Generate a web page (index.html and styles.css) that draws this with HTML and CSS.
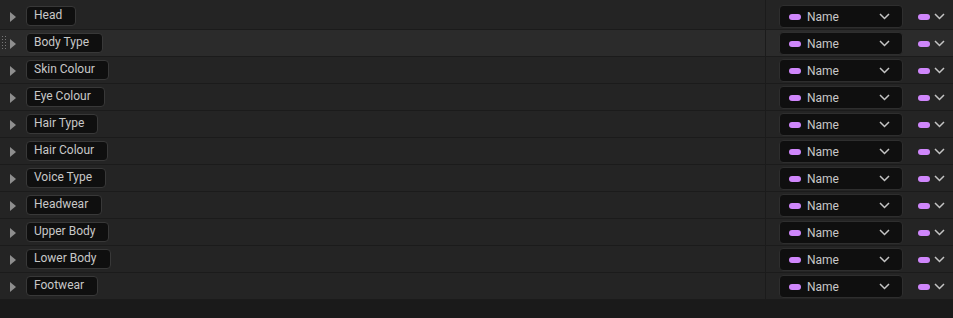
FILE: index.html
```html
<!DOCTYPE html>
<html>
<head>
  <link rel="stylesheet" href="styles.css">
</head>
<body>
  <div class="details">
    <div class="top-strip"><div class="left"></div><div class="right"></div></div>

    <div class="row">
      <div class="left"><span class="handle"></span><span class="arrow"></span><span class="name-box">Head</span></div>
      <div class="right"><div class="dropdown"><span class="pin"></span><span class="label">Name</span><svg class="chev" width="11" height="7" viewBox="0 0 11 7"><polyline points="1,1 5.5,5.5 10,1"/></svg></div><span class="pin"></span><svg class="chev small" width="11" height="7" viewBox="0 0 11 7"><polyline points="1,1 5.5,5.5 10,1"/></svg></div>
    </div>
    <div class="row hovered">
      <div class="left"><span class="handle"></span><span class="arrow"></span><span class="name-box">Body Type</span></div>
      <div class="right"><div class="dropdown"><span class="pin"></span><span class="label">Name</span><svg class="chev" width="11" height="7" viewBox="0 0 11 7"><polyline points="1,1 5.5,5.5 10,1"/></svg></div><span class="pin"></span><svg class="chev small" width="11" height="7" viewBox="0 0 11 7"><polyline points="1,1 5.5,5.5 10,1"/></svg></div>
    </div>
    <div class="row">
      <div class="left"><span class="handle"></span><span class="arrow"></span><span class="name-box">Skin Colour</span></div>
      <div class="right"><div class="dropdown"><span class="pin"></span><span class="label">Name</span><svg class="chev" width="11" height="7" viewBox="0 0 11 7"><polyline points="1,1 5.5,5.5 10,1"/></svg></div><span class="pin"></span><svg class="chev small" width="11" height="7" viewBox="0 0 11 7"><polyline points="1,1 5.5,5.5 10,1"/></svg></div>
    </div>
    <div class="row">
      <div class="left"><span class="handle"></span><span class="arrow"></span><span class="name-box">Eye Colour</span></div>
      <div class="right"><div class="dropdown"><span class="pin"></span><span class="label">Name</span><svg class="chev" width="11" height="7" viewBox="0 0 11 7"><polyline points="1,1 5.5,5.5 10,1"/></svg></div><span class="pin"></span><svg class="chev small" width="11" height="7" viewBox="0 0 11 7"><polyline points="1,1 5.5,5.5 10,1"/></svg></div>
    </div>
    <div class="row">
      <div class="left"><span class="handle"></span><span class="arrow"></span><span class="name-box">Hair Type</span></div>
      <div class="right"><div class="dropdown"><span class="pin"></span><span class="label">Name</span><svg class="chev" width="11" height="7" viewBox="0 0 11 7"><polyline points="1,1 5.5,5.5 10,1"/></svg></div><span class="pin"></span><svg class="chev small" width="11" height="7" viewBox="0 0 11 7"><polyline points="1,1 5.5,5.5 10,1"/></svg></div>
    </div>
    <div class="row">
      <div class="left"><span class="handle"></span><span class="arrow"></span><span class="name-box">Hair Colour</span></div>
      <div class="right"><div class="dropdown"><span class="pin"></span><span class="label">Name</span><svg class="chev" width="11" height="7" viewBox="0 0 11 7"><polyline points="1,1 5.5,5.5 10,1"/></svg></div><span class="pin"></span><svg class="chev small" width="11" height="7" viewBox="0 0 11 7"><polyline points="1,1 5.5,5.5 10,1"/></svg></div>
    </div>
    <div class="row">
      <div class="left"><span class="handle"></span><span class="arrow"></span><span class="name-box">Voice Type</span></div>
      <div class="right"><div class="dropdown"><span class="pin"></span><span class="label">Name</span><svg class="chev" width="11" height="7" viewBox="0 0 11 7"><polyline points="1,1 5.5,5.5 10,1"/></svg></div><span class="pin"></span><svg class="chev small" width="11" height="7" viewBox="0 0 11 7"><polyline points="1,1 5.5,5.5 10,1"/></svg></div>
    </div>
    <div class="row">
      <div class="left"><span class="handle"></span><span class="arrow"></span><span class="name-box">Headwear</span></div>
      <div class="right"><div class="dropdown"><span class="pin"></span><span class="label">Name</span><svg class="chev" width="11" height="7" viewBox="0 0 11 7"><polyline points="1,1 5.5,5.5 10,1"/></svg></div><span class="pin"></span><svg class="chev small" width="11" height="7" viewBox="0 0 11 7"><polyline points="1,1 5.5,5.5 10,1"/></svg></div>
    </div>
    <div class="row">
      <div class="left"><span class="handle"></span><span class="arrow"></span><span class="name-box">Upper Body</span></div>
      <div class="right"><div class="dropdown"><span class="pin"></span><span class="label">Name</span><svg class="chev" width="11" height="7" viewBox="0 0 11 7"><polyline points="1,1 5.5,5.5 10,1"/></svg></div><span class="pin"></span><svg class="chev small" width="11" height="7" viewBox="0 0 11 7"><polyline points="1,1 5.5,5.5 10,1"/></svg></div>
    </div>
    <div class="row">
      <div class="left"><span class="handle"></span><span class="arrow"></span><span class="name-box">Lower Body</span></div>
      <div class="right"><div class="dropdown"><span class="pin"></span><span class="label">Name</span><svg class="chev" width="11" height="7" viewBox="0 0 11 7"><polyline points="1,1 5.5,5.5 10,1"/></svg></div><span class="pin"></span><svg class="chev small" width="11" height="7" viewBox="0 0 11 7"><polyline points="1,1 5.5,5.5 10,1"/></svg></div>
    </div>
    <div class="row">
      <div class="left"><span class="handle"></span><span class="arrow"></span><span class="name-box">Footwear</span></div>
      <div class="right"><div class="dropdown"><span class="pin"></span><span class="label">Name</span><svg class="chev" width="11" height="7" viewBox="0 0 11 7"><polyline points="1,1 5.5,5.5 10,1"/></svg></div><span class="pin"></span><svg class="chev small" width="11" height="7" viewBox="0 0 11 7"><polyline points="1,1 5.5,5.5 10,1"/></svg></div>
    </div>
  </div>
</body>
</html>
```

FILE: styles.css
```css
body {
  margin: 0;
  background-color: #1a1a1a;
  font-family: 'Roboto', 'Liberation Sans', sans-serif;
  font-size: 12px;
  color: #c4c4c4;
}

.details {
  display: flex;
  flex-direction: column;
}

/* rows share the same two-column grid */
.top-strip,
.row {
  display: grid;
  grid-template-columns: 765px 1fr;
  column-gap: 1px;
  background: #1b1b1b;
  border-bottom: 1px solid #1b1b1b;
}

.top-strip {
  height: 2px;
}

.top-strip .left,
.top-strip .right {
  background: #242424;
}

.row {
  height: 26px;
}

.left,
.right {
  background: #242424;
  display: flex;
  align-items: center;
}

.row.hovered .left,
.row.hovered .right {
  background: #2b2b2b;
}

.left {
  align-items: flex-start;
  padding-top: 3px;
}

.handle {
  width: 5px;
  height: 14px;
  margin: 2px 4px 0 1px;
}

.row.hovered .handle {
  background-image: radial-gradient(circle, #777 0.6px, transparent 0.9px);
  background-size: 3px 3px;
}

.arrow {
  width: 0;
  height: 0;
  margin-top: 6px;
  margin-right: 10px;
  border-top: 5px solid transparent;
  border-bottom: 5px solid transparent;
  border-left: 6px solid #8e8e8e;
}

.name-box {
  box-sizing: border-box;
  height: 20px;
  line-height: 17px;
  padding: 0 13px 0 7px;
  background: #0f0f0f;
  border: 1px solid #383838;
  border-radius: 4px;
  color: #c8c8c8;
}

.right {
  padding-left: 13px;
  padding-top: 1px;
}

.dropdown {
  box-sizing: border-box;
  width: 124px;
  height: 23px;
  display: flex;
  align-items: center;
  padding: 0 12px 0 9px;
  background: #0f0f0f;
  border: 1px solid #2e2e2e;
  border-radius: 4px;
  margin-right: 15px;
}

.pin {
  width: 12px;
  height: 6px;
  border-radius: 3px;
  background: #cf86fb;
  flex-shrink: 0;
}

.label {
  margin-left: 6px;
  flex: 1;
  color: #c8c8c8;
}

.chev {
  fill: none;
  stroke: #c4c4c4;
  stroke-width: 1.5;
  flex-shrink: 0;
}

.chev.small {
  margin-left: 4px;
}
```
